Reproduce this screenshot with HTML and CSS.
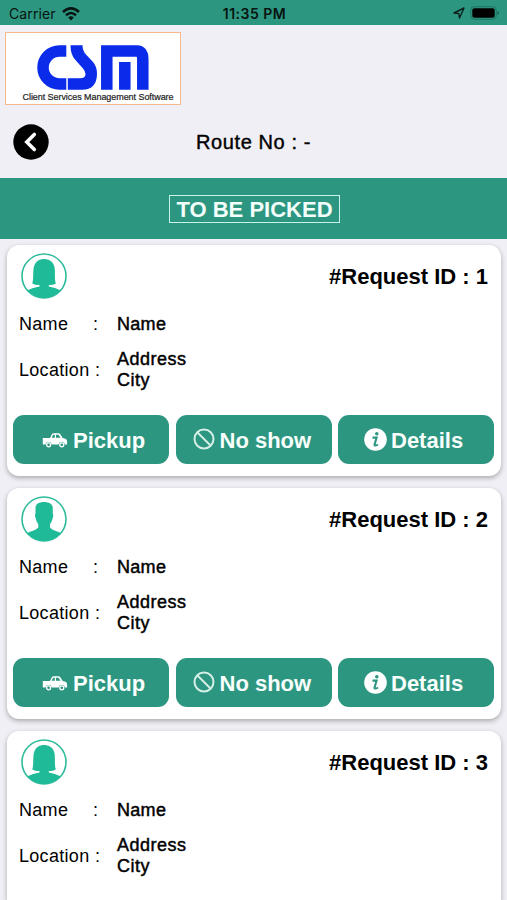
FILE: index.html
```html
<!DOCTYPE html>
<html lang="en">
<head>
<meta charset="utf-8">
<title>Route</title>
<link rel="stylesheet" href="styles.css">
</head>
<body>
<svg class="defs" width="0" height="0" aria-hidden="true">
  <clipPath id="disc"><circle cx="23" cy="23" r="22"/></clipPath>
  <symbol id="woman" viewBox="0 0 46 46">
    <circle cx="23" cy="23" r="22" fill="#fff" stroke="#2fbc9c" stroke-width="1.6"/>
    <path clip-path="url(#disc)" fill="#1fba98" d="M11.300 30.500C13 25 11.500 17 13.300 12.500C15 8 19 6 23 6S31.500 8 33 12.500C34.800 17 33 25 34.800 30.500Q31.500 32.400 27.800 32V33.500Q34 34.500 40 37.500V46H6V37.500Q12 34.500 18.500 33.500V32Q14.500 32.400 11.300 30.500Z"/>
  </symbol>
  <symbol id="man" viewBox="0 0 46 46">
    <circle cx="23" cy="23" r="22" fill="#fff" stroke="#2fbc9c" stroke-width="1.6"/>
    <path clip-path="url(#disc)" fill="#1fba98" d="M14.500 12C14.500 8 18 6 23 6S31.800 8 31.800 12V17.500Q32.800 19 31.600 22.500Q30.800 26 29 28V31.500Q30 33.500 40 37V46H6V37Q16 33.500 17.300 31.500V28Q15.400 26 14.700 22.500Q13.400 19 14.500 17.500Z"/>
  </symbol>
  <symbol id="car" viewBox="0 0 25 15">
    <path fill="#fff" d="M.3 5H7.500L9.500 1Q10 .3 11 .3H16Q17 .3 17.600 1L20.200 5Q24.500 5.500 24.600 8.200V11.500H22.500A3.300 3.300 0 0 0 16.100 11.500H9.300A3.300 3.300 0 0 0 2.900 11.500H.3Z"/>
    <path fill="#2d9681" d="M9.200 4.700L10.600 1.700H12.300V4.700ZM13.500 1.700H16.100L18 4.700H13.500Z"/>
    <circle cx="6.100" cy="11.800" r="2" fill="none" stroke="#fff" stroke-width="1.300"/>
    <circle cx="19.300" cy="11.800" r="2" fill="none" stroke="#fff" stroke-width="1.300"/>
  </symbol>
  <symbol id="ban" viewBox="0 0 22 22">
    <circle cx="11" cy="11" r="9.500" fill="none" stroke="#d5efe7" stroke-width="2"/>
    <path d="M4.500 4.500L17.500 17.500" stroke="#d5efe7" stroke-width="2"/>
  </symbol>
  <symbol id="info" viewBox="0 0 23 23">
    <circle cx="11.500" cy="11.500" r="11.300" fill="#fff"/>
    <circle cx="12.800" cy="5.700" r="1.800" fill="#2d9681"/>
    <path d="M8.500 9.600H12.600L10.500 16.600Q10.300 18.500 14 16.600" fill="none" stroke="#2d9681" stroke-width="2.100"/>
  </symbol>
</svg>

<header class="status">
  <div class="status-side"><span class="carrier">Carrier</span>
    <svg class="wifi" viewBox="0 0 18 14"><g fill="none" stroke="#07140f" stroke-width="2.500"><path d="M1 5Q9-2.300 17 5"/><path d="M4 8.300Q9 3.800 14 8.300"/></g><path d="M6.200 10.500Q9 8.200 11.800 10.500L9 13.600Z" fill="#07140f"/></svg>
  </div>
  <time class="clock">11:35 PM</time>
  <div class="status-side status-right">
    <svg class="arrow" viewBox="0 0 12 12"><path d="M1 6L11 1L6.500 11L5.800 6.500Z" fill="none" stroke="#0a211b" stroke-width="1.400" stroke-linejoin="round"/></svg>
    <svg class="battery" viewBox="0 0 30 14"><rect x=".7" y=".7" width="25.600" height="12.600" rx="3.500" fill="none" stroke="#1f7463" stroke-width="1"/><rect x="2.300" y="2.300" width="22.400" height="9.400" rx="2" fill="#000"/><path d="M27.500 5V9Q29 8.500 29 7T27.500 5Z" fill="#1b6253"/></svg>
  </div>
</header>

<div class="brand">
  <svg class="brand-mark" viewBox="0 0 112 45" fill="none" stroke="#0b2bea" stroke-width="11.500">
    <path d="M29.300 6H22.500A16.500 16.500 0 0 0 22.500 39H29.300"/>
    <path fill="#0b2bea" stroke="none" d="M33.500 .3H45.500Q45.500 6 49 9.500L56 17Q60 21.500 60 28.500Q60 44.700 45 44.700H30.800V33.300H43Q48.500 33.300 48.500 29Q48.500 26.500 46 23.500L38 14.500Q33.500 9.500 33.500 .3Z"/>
    <path d="M69.800 44.700V6H100Q105.800 6 105.800 14V44.700M87.800 44.700V17"/>
  </svg>
  <span class="brand-text">Client Services Management Software</span>
</div>

<nav class="route">
  <svg class="back" viewBox="0 0 36 36"><circle cx="18" cy="18" r="17.700"/><path d="M21.300 10.500L13.800 18L21.300 25.500" fill="none" stroke="#fff" stroke-width="3.600" stroke-linecap="round"/></svg>
  <h1 class="route-title">Route No : -</h1>
</nav>

<div class="banner"><span class="banner-label">TO BE PICKED</span></div>

<main class="list">
  <article class="card">
    <div class="card-head"><svg class="avatar"><use href="#woman"/></svg><h2 class="request">#Request ID : 1</h2></div>
    <div class="field name"><span class="label">Name</span><span class="colon">:</span><span class="value">Name</span></div>
    <div class="field location"><span class="label">Location</span><span class="colon">:</span><span class="value">Address<br>City</span></div>
    <div class="actions">
      <button class="btn pickup"><svg class="car"><use href="#car"/></svg><span>Pickup</span></button>
      <button class="btn noshow"><svg class="ban"><use href="#ban"/></svg><span>No show</span></button>
      <button class="btn details"><svg class="info"><use href="#info"/></svg><span>Details</span></button>
    </div>
  </article>
  <article class="card">
    <div class="card-head"><svg class="avatar"><use href="#man"/></svg><h2 class="request">#Request ID : 2</h2></div>
    <div class="field name"><span class="label">Name</span><span class="colon">:</span><span class="value">Name</span></div>
    <div class="field location"><span class="label">Location</span><span class="colon">:</span><span class="value">Address<br>City</span></div>
    <div class="actions">
      <button class="btn pickup"><svg class="car"><use href="#car"/></svg><span>Pickup</span></button>
      <button class="btn noshow"><svg class="ban"><use href="#ban"/></svg><span>No show</span></button>
      <button class="btn details"><svg class="info"><use href="#info"/></svg><span>Details</span></button>
    </div>
  </article>
  <article class="card card-last">
    <div class="card-head"><svg class="avatar"><use href="#woman"/></svg><h2 class="request">#Request ID : 3</h2></div>
    <div class="field name"><span class="label">Name</span><span class="colon">:</span><span class="value">Name</span></div>
    <div class="field location"><span class="label">Location</span><span class="colon">:</span><span class="value">Address<br>City</span></div>
  </article>
</main>
</body>
</html>
```
FILE: styles.css
```css
* { box-sizing: border-box; }
body {
  margin: 0;
  height: 900px;
  overflow: hidden;
  display: flex;
  flex-direction: column;
  background: #f0eff5;
  color: #000;
  font-family: "Liberation Sans", Arial, sans-serif;
}
svg { display: block; flex: none; }
.defs { position: absolute; }

.status {
  flex: none;
  display: grid;
  grid-template-columns: 1fr auto 1fr;
  align-items: center;
  height: 25px;
  padding: 3px 7px 0 9px;
  background: #2d9681;
  color: #07140f;
}
.status-side { display: flex; align-items: center; gap: 6px; }
.status-right { justify-content: flex-end; }
.carrier { font: 14px/20px Inter, sans-serif; letter-spacing: .1px; }
.clock { font: 600 14px/20px Inter, sans-serif; letter-spacing: .5px; }
.wifi { width: 18px; height: 14px; }
.status-right { padding-bottom: 2px; }
.arrow { width: 12px; height: 12px; margin-right: -1px; }
.battery { width: 30px; height: 14px; }

.brand {
  flex: none;
  display: flex;
  flex-direction: column;
  width: 176px;
  height: 73px;
  margin: 7px 0 0 5px;
  padding: 12px 0 0 16.500px;
  border: 1px solid #f5b98e;
  background: #fff;
}
.brand-mark { width: 112px; height: 45px; margin-left: 14px; }
.brand-text { font-size: 9px; line-height: 12px; margin-top: 1px; white-space: nowrap; color: #222; letter-spacing: -.06px; -webkit-text-stroke: .2px #222; }

.route {
  flex: none;
  display: grid;
  grid-template-columns: 36px 1fr 36px;
  align-items: center;
  height: 73px;
  padding: 0 13px;
}
.back { width: 36px; height: 36px; }
.route-title { margin: 2px 0 0; text-align: center; font-size: 20px; font-weight: 400; -webkit-text-stroke: .4px #000; letter-spacing: .6px; }

.banner {
  flex: none;
  display: flex;
  align-items: center;
  justify-content: center;
  height: 61px;
  padding-left: 2px;
  background: #2d9681;
}
.banner-label {
  width: 171px;
  height: 28px;
  border: 1.500px solid #c9f3e6;
  color: #f3fffb;
  text-align: center;
  white-space: nowrap;
  font-size: 22px;
  line-height: 27px;
  font-weight: 700;
}

.list { flex: 1; min-height: 0; overflow: hidden; display: flex; flex-direction: column; gap: 12px; padding: 6px 6px 0 7px; }
.card {
  flex: none;
  height: 231px;
  padding: 8px 6px 0;
  border-radius: 12px;
  background: #fff;
  box-shadow: 0 2px 5px rgba(0, 0, 0, .3);
}
.card-last { flex: 1; height: auto; min-height: 0; border-radius: 12px 12px 0 0; }
.card-head { display: flex; justify-content: space-between; align-items: center; height: 46px; padding: 0 7px 0 8px; }
.avatar { width: 46px; height: 46px; }
.request { margin: 2px 0 0; font-size: 22px; line-height: 26px; font-weight: 700; }
.field { display: grid; grid-template-columns: 74px 24px 1fr; align-items: center; padding-left: 6px; font-size: 18px; line-height: 22px; }
.name { height: 22px; margin-top: 14px; }
.location { height: 44px; margin-top: 13px; }
.location .colon { padding-left: 2px; }
.location .value { line-height: 21.500px; }
.value { -webkit-text-stroke: .45px #000; letter-spacing: .5px; }
.name .value { letter-spacing: .3px; }
.label { letter-spacing: .3px; }
.actions { display: grid; grid-template-columns: repeat(3, 156px); gap: 6.500px; margin-top: 23px; }
.btn {
  display: flex;
  align-items: center;
  height: 49px;
  padding: 2px 0 0;
  border: 0;
  border-radius: 11px;
  background: #2d9681;
  color: #f8fffc;
  font: 700 22px/26px "Liberation Sans", Arial, sans-serif;
  white-space: nowrap;
}
.pickup { padding-left: 29px; gap: 5px; }
.noshow { padding-left: 17px; gap: 5px; }
.details { padding-left: 26px; gap: 4px; }
.car { width: 26px; height: 15px; }
.ban { width: 22px; height: 22px; margin-top: -3px; }
.info { width: 23px; height: 23px; margin-top: -3px; }
```
